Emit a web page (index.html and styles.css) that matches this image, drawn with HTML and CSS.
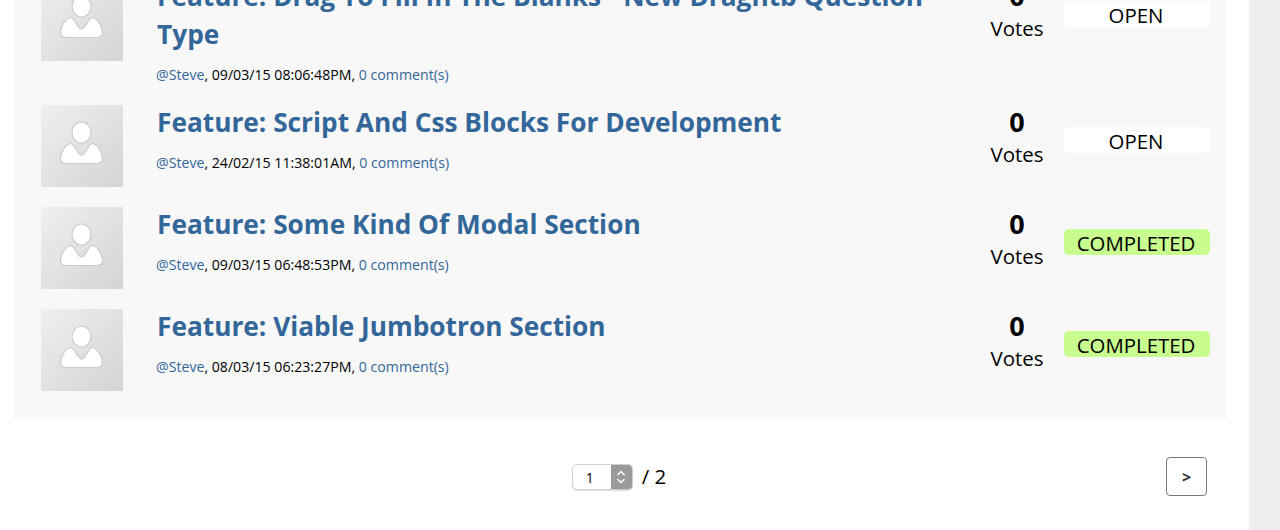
FILE: index.html
```html
<!DOCTYPE html>
<html lang="en">
<head>
    <meta charset="UTF-8">
    <meta name="viewport" content="width=device-width, initial-scale=1.0">
    <title>Feature Requests</title>
    <link rel="stylesheet" href="styles.css">
</head>
<body>
    <svg class="svg-defs" width="0" height="0">
        <defs>
            <linearGradient id="avatarBg" x1="0" y1="0" x2="1" y2="1">
                <stop offset="0" stop-color="#efefef"/>
                <stop offset="1" stop-color="#d4d4d4"/>
            </linearGradient>
            <symbol id="avatar" viewBox="0 0 82 82">
                <rect width="82" height="82" fill="url(#avatarBg)"/>
                <g fill="#fff" stroke="#cbcbcb" stroke-width="1.2">
                    <ellipse cx="40.500" cy="27.500" rx="9.500" ry="10.500"/>
                    <path d="M30 38.500 C34 39 36 50 40.500 50 C45 50 47 39 51 38.500 C56 39 61 46 61.500 53 C61.500 57 59.500 58.500 56 58.500 L25 58.500 C21.500 58.500 19.500 57 19.500 53 C20 46 25 39 30 38.500 Z"/>
                </g>
            </symbol>
        </defs>
    </svg>

    <div class="page">
        <main class="content">
            <section class="feature-list">
                <article class="feature">
                    <svg class="avatar"><use href="#avatar"/></svg>
                    <div class="feature-body">
                        <h2><a href="#">Feature: Drag To Fill In The Blanks - New Dragntb Question Type</a></h2>
                        <p class="meta"><a href="#">@Steve</a>, 09/03/15 08:06:48PM, <a href="#">0 comment(s)</a></p>
                    </div>
                    <div class="votes"><strong>0</strong><span>Votes</span></div>
                    <div class="status">OPEN</div>
                </article>
                <article class="feature">
                    <svg class="avatar"><use href="#avatar"/></svg>
                    <div class="feature-body">
                        <h2><a href="#">Feature: Script And Css Blocks For Development</a></h2>
                        <p class="meta"><a href="#">@Steve</a>, 24/02/15 11:38:01AM, <a href="#">0 comment(s)</a></p>
                    </div>
                    <div class="votes"><strong>0</strong><span>Votes</span></div>
                    <div class="status">OPEN</div>
                </article>
                <article class="feature">
                    <svg class="avatar"><use href="#avatar"/></svg>
                    <div class="feature-body">
                        <h2><a href="#">Feature: Some Kind Of Modal Section</a></h2>
                        <p class="meta"><a href="#">@Steve</a>, 09/03/15 06:48:53PM, <a href="#">0 comment(s)</a></p>
                    </div>
                    <div class="votes"><strong>0</strong><span>Votes</span></div>
                    <div class="status completed">COMPLETED</div>
                </article>
                <article class="feature">
                    <svg class="avatar"><use href="#avatar"/></svg>
                    <div class="feature-body">
                        <h2><a href="#">Feature: Viable Jumbotron Section</a></h2>
                        <p class="meta"><a href="#">@Steve</a>, 08/03/15 06:23:27PM, <a href="#">0 comment(s)</a></p>
                    </div>
                    <div class="votes"><strong>0</strong><span>Votes</span></div>
                    <div class="status completed">COMPLETED</div>
                </article>
            </section>

            <nav class="pager">
                <div class="pager-middle">
                    <div class="page-select">
                        <span class="page-select-value">1</span>
                        <span class="page-select-arrows">
                            <svg width="10" height="16" viewBox="0 0 10 16"><path d="M1.500 6 L5 2.500 L8.500 6 M1.500 10 L5 13.500 L8.500 10" fill="none" stroke="#fff" stroke-width="1.500"/></svg>
                        </span>
                    </div>
                    <span class="page-total">/ 2</span>
                </div>
                <button class="next-btn">&gt;</button>
            </nav>
        </main>
        <aside class="side-strip"></aside>
    </div>
</body>
</html>
```

FILE: styles.css
```css
html, body {
    height: 100%;
}
body {
    margin: 0;
    overflow: hidden;
    background: #fff;
    color: #000;
    font-family: "Open Sans", Arial, sans-serif;
}
a {
    color: #336699;
    text-decoration: none;
}
.svg-defs {
    display: block;
    height: 0;
}
.page {
    display: flex;
    height: 100%;
}
.content {
    width: 1227px;
    margin-left: 13px;
    margin-top: -21px;
    flex: none;
}
.side-strip {
    width: 31px;
    margin-left: 9px;
    flex: none;
    background: #eeeeee;
}
.feature-list {
    background: #f8f8f8;
    padding: 0 17px 28px 28px;
    width: 1214px;
    box-sizing: border-box;
    display: flex;
    flex-direction: column;
    gap: 20px;
}
.feature {
    display: flex;
    align-items: flex-start;
}
.avatar {
    width: 82px;
    height: 82px;
    flex: none;
}
.feature-body {
    width: 813px;
    margin-left: 34px;
    flex: none;
}
.feature-body h2 {
    margin: -2px 0 0;
    font-size: 26.250px;
    line-height: 38px;
    font-weight: 700;
}
.meta {
    margin: 13px 0 1px -1px;
    font-size: 14.150px;
    line-height: 18px;
}
.votes {
    width: 94px;
    flex: none;
    text-align: center;
}
.votes strong {
    display: block;
    font-size: 27px;
    line-height: 34px;
}
.votes span {
    display: block;
    font-size: 20.500px;
    line-height: 32px;
    margin-top: -1px;
}
.status {
    width: 146px;
    height: 26px;
    margin-top: 22px;
    padding-right: 2px;
    box-sizing: border-box;
    flex: none;
    border-radius: 5px;
    background: #fff;
    text-align: center;
    font-size: 20.400px;
    line-height: 29px;
}
.status.completed {
    background: #c8fc8f;
}
.pager {
    width: 1214px;
    display: flex;
    justify-content: center;
    position: relative;
    padding-top: 38px;
}
.pager-middle {
    display: flex;
    align-items: center;
    gap: 9px;
    height: 39px;
    margin-left: -2px;
}
.page-select {
    display: flex;
    width: 61px;
    height: 26px;
    margin-top: 1px;
    box-sizing: border-box;
    border: 1px solid #d0d0d0;
    border-radius: 5px;
    overflow: hidden;
    background: #fff;
    box-shadow: 0 1px 1px rgba(0, 0, 0, 0.15);
}
.page-select-value {
    flex: 1;
    padding-left: 13px;
    font-size: 14px;
    line-height: 25px;
}
.page-select-arrows {
    width: 21px;
    display: flex;
    align-items: center;
    justify-content: center;
    background: #9a9a9a;
}
.page-total {
    font-size: 20.500px;
    margin-top: -2px;
}
.next-btn {
    position: absolute;
    right: 20px;
    top: 38px;
    width: 41px;
    height: 39px;
    border: 1px solid #777;
    border-radius: 4px;
    background: #fff;
    color: #333;
    font-family: "Open Sans", Arial, sans-serif;
    font-size: 16px;
    font-weight: 700;
    padding: 0;
}
```
